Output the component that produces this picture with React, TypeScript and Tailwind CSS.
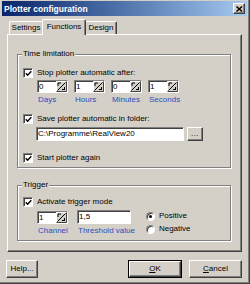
import * as React from 'react'

const sunken =
  'border border-t-[#808080] border-l-[#808080] border-r-white border-b-white shadow-[inset_1px_1px_0_#404040]'
const raised =
  'border border-t-white border-l-white border-r-[#404040] border-b-[#404040] shadow-[inset_-1px_-1px_0_#808080]'

function Check({ label }: { label: string }) {
  return (
    <div className="flex items-center h-[10px]">
      <span className={`w-[10px] h-[10px] bg-white flex items-center justify-center shrink-0 ${sunken}`}>
        <svg width="7" height="7" viewBox="0 0 7 7">
          <path d="M0.8 3.2 L2.6 5.2 L6.3 1.2" stroke="#000" strokeWidth="1.4" fill="none" />
        </svg>
      </span>
      <span className="ml-[4px] leading-[10px] whitespace-nowrap">{label}</span>
    </div>
  )
}

function Radio({ label, on }: { label: string; on?: boolean }) {
  return (
    <div className="flex items-center h-[10px]">
      <span className="w-[9px] h-[9px] rounded-full bg-white border border-t-[#808080] border-l-[#808080] border-r-white border-b-white shadow-[inset_1px_1px_0_#404040] flex items-center justify-center shrink-0">
        {on && <span className="w-[3px] h-[3px] rounded-full bg-black" />}
      </span>
      <span className="ml-[4px] leading-[10px]">{label}</span>
    </div>
  )
}

function Spin({ value, label }: { value: string; label: string }) {
  return (
    <div className="flex flex-col">
      <div className={`w-[31px] h-[13px] bg-white flex ${sunken}`}>
        <span className="flex-1 pl-[1px] leading-[11px]">{value}</span>
        <span className="w-[11px] h-[11px] bg-[#d4d0c8] shrink-0">
          <svg width="11" height="11" viewBox="0 0 11 11">
            <path d="M0.5 10.5 V0.5 H10.5" stroke="#fff" fill="none" />
            <path d="M10.5 0.5 V10.5 H0.5" stroke="#404040" fill="none" />
            <path d="M1.5 9.5 L9.5 1.5" stroke="#000" strokeWidth="1" />
            <path d="M2 2 H5 M2 2 V5" stroke="#000" />
            <path d="M6 8.5 H9 M8.5 6 V9" stroke="#000" />
          </svg>
        </span>
      </div>
      <span className="mt-[2px] pl-[1px] leading-[10px] text-[#2a4fc0]">{label}</span>
    </div>
  )
}

function Group({ title, className, children }: { title: string; className: string; children: React.ReactNode }) {
  return (
    <div className={`relative border border-[#808080] shadow-[1px_1px_0_#fff,inset_1px_1px_0_#fff] ${className}`}>
      <span className="absolute -top-[6px] left-[4px] px-[1px] bg-[#d4d0c8] leading-[10px]">{title}</span>
      {children}
    </div>
  )
}

function Button({ children, className, isDefault }: { children: React.ReactNode; className: string; isDefault?: boolean }) {
  return (
    <div className={`h-[18px] ${isDefault ? 'border border-black' : ''} ${className}`}>
      <div className={`w-full h-full flex items-center justify-center bg-[#d4d0c8] ${raised}`}>{children}</div>
    </div>
  )
}

export default function App() {
  return (
    <div className="w-[250px] h-[284px] bg-[#d4d0c8] overflow-hidden text-[8px] text-black font-['Liberation_Sans',Arial,sans-serif] shadow-[inset_-1px_-1px_0_#404040,inset_-2px_-2px_0_#808080]">
      <div className="pt-[1px] pl-[2px]">
        <div className="w-[245px] h-[15px] bg-linear-to-r from-[#0a246a] to-[#a6caf0] flex items-center pl-[2px]">
          <span className="text-white font-bold text-[8.5px] leading-[10px]">Plotter configuration</span>
          <span className={`ml-auto mr-[2px] w-[12px] h-[11px] bg-[#d4d0c8] flex items-center justify-center ${raised}`}>
            <svg width="7" height="6" viewBox="0 0 7 6">
              <path d="M0.5 0.5 L6 5.5 M6 0.5 L0.5 5.5" stroke="#000" strokeWidth="1.5" />
            </svg>
          </span>
        </div>
      </div>

      <div className="mt-[3px] h-[15px] flex items-end pl-[9px]">
        <div className="w-[33px] h-[13px] border-l border-t border-white rounded-tl-[2px] flex items-center justify-center leading-[10px]">
          Settings
        </div>
        <div className="relative z-10 w-[44px] h-[16px] -mb-[1px] bg-[#d4d0c8] border-l border-t border-r border-l-white border-t-white border-r-[#404040] rounded-t-[2px] shadow-[inset_-1px_0_0_#808080] flex items-start justify-center pt-[2px] leading-[10px]">
          Functions
        </div>
        <div className="w-[31px] h-[13px] border-t border-r border-t-white border-r-[#404040] rounded-tr-[2px] shadow-[inset_-1px_0_0_#808080] flex items-center justify-center leading-[10px]">
          Design
        </div>
      </div>

      <div className={`ml-[7px] w-[235px] h-[218px] ${raised}`}>
        <Group title="Time limitation" className="ml-[9px] mt-[19px] w-[214px] h-[114px] pl-[5px]">
          <div className="mt-[13px]">
            <Check label="Stop plotter automatic after:" />
          </div>
          <div className="mt-[2px] ml-[14px] flex gap-[6px]">
            <Spin value="0" label="Days" />
            <Spin value="1" label="Hours" />
            <Spin value="0" label="Minutes" />
            <Spin value="1" label="Seconds" />
          </div>
          <div className="mt-[9px]">
            <Check label="Save plotter automatic in folder:" />
          </div>
          <div className="mt-[3px] ml-[13px] flex gap-[3px]">
            <div className={`w-[148px] h-[14px] bg-white pl-[1px] leading-[12px] ${sunken}`}>C:\Programme\RealView20</div>
            <div className={`w-[16px] h-[14px] flex items-end justify-center pb-[3px] ${raised}`}>
              <span className="leading-[6px] tracking-[0.5px]">...</span>
            </div>
          </div>
          <div className="mt-[12px]">
            <Check label="Start plotter again" />
          </div>
        </Group>

        <Group title="Trigger" className="ml-[9px] mt-[17px] w-[214px] h-[56px] pl-[5px]">
          <div className="mt-[11px]">
            <Check label="Activate trigger mode" />
          </div>
          <div className="mt-[3px] ml-[14px] flex items-start">
            <div className="mt-[1px]">
              <Spin value="1" label="Channel" />
            </div>
            <div className="ml-[9px] flex flex-col">
              <div className={`w-[54px] h-[14px] bg-white pl-[1px] leading-[12px] ${sunken}`}>1,5</div>
              <span className="mt-[2px] pl-[1px] leading-[10px] text-[#2a4fc0]">Threshold value</span>
            </div>
            <div className="ml-[11px] mt-[1px] flex flex-col gap-[3px]">
              <Radio label="Positive" on />
              <Radio label="Negative" />
            </div>
          </div>
        </Group>
      </div>

      <div className="mt-[8px] flex">
        <Button className="ml-[6px] w-[32px]">Help...</Button>
        <Button className="ml-[90px] w-[54px]" isDefault>
          <span className="underline">O</span>K
        </Button>
        <Button className="ml-[7px] w-[53px]">
          <span className="underline">C</span>ancel
        </Button>
      </div>
    </div>
  )
}
